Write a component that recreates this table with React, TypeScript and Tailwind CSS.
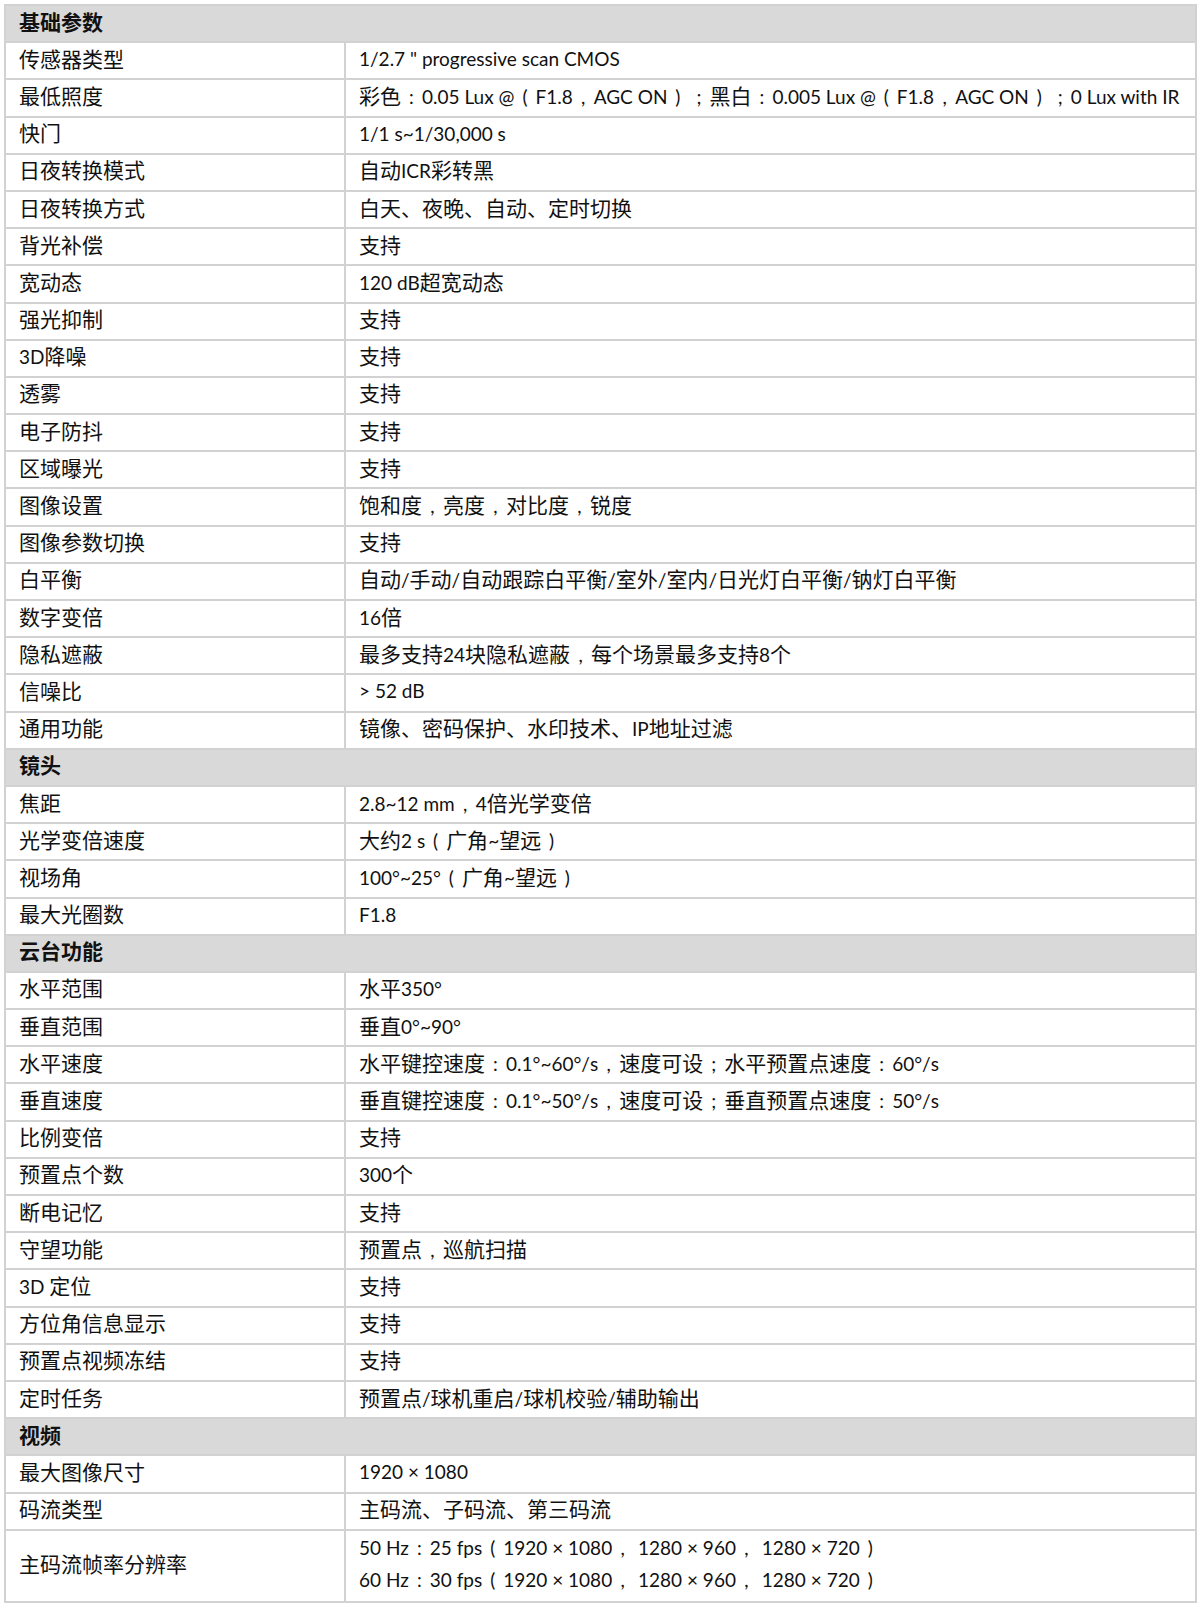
import React from "react";

type Row = [string, string | string[]];
type Section = { title: string; rows: Row[] };

const sections: Section[] = [
  {
    title: "基础参数",
    rows: [
      ["传感器类型", "1/2.7 \" progressive scan CMOS"],
      ["最低照度", "彩色：0.05 Lux @（F1.8，AGC ON）；黑白：0.005 Lux @（F1.8，AGC ON）；0 Lux with IR"],
      ["快门", "1/1 s~1/30,000 s"],
      ["日夜转换模式", "自动ICR彩转黑"],
      ["日夜转换方式", "白天、夜晚、自动、定时切换"],
      ["背光补偿", "支持"],
      ["宽动态", "120 dB超宽动态"],
      ["强光抑制", "支持"],
      ["3D降噪", "支持"],
      ["透雾", "支持"],
      ["电子防抖", "支持"],
      ["区域曝光", "支持"],
      ["图像设置", "饱和度，亮度，对比度，锐度"],
      ["图像参数切换", "支持"],
      ["白平衡", "自动/手动/自动跟踪白平衡/室外/室内/日光灯白平衡/钠灯白平衡"],
      ["数字变倍", "16倍"],
      ["隐私遮蔽", "最多支持24块隐私遮蔽，每个场景最多支持8个"],
      ["信噪比", "> 52 dB"],
      ["通用功能", "镜像、密码保护、水印技术、IP地址过滤"],
    ],
  },
  {
    title: "镜头",
    rows: [
      ["焦距", "2.8~12 mm，4倍光学变倍"],
      ["光学变倍速度", "大约2 s（广角~望远）"],
      ["视场角", "100°~25°（广角~望远）"],
      ["最大光圈数", "F1.8"],
    ],
  },
  {
    title: "云台功能",
    rows: [
      ["水平范围", "水平350°"],
      ["垂直范围", "垂直0°~90°"],
      ["水平速度", "水平键控速度：0.1°~60°/s，速度可设；水平预置点速度：60°/s"],
      ["垂直速度", "垂直键控速度：0.1°~50°/s，速度可设；垂直预置点速度：50°/s"],
      ["比例变倍", "支持"],
      ["预置点个数", "300个"],
      ["断电记忆", "支持"],
      ["守望功能", "预置点，巡航扫描"],
      ["3D 定位", "支持"],
      ["方位角信息显示", "支持"],
      ["预置点视频冻结", "支持"],
      ["定时任务", "预置点/球机重启/球机校验/辅助输出"],
    ],
  },
  {
    title: "视频",
    rows: [
      ["最大图像尺寸", "1920 × 1080"],
      ["码流类型", "主码流、子码流、第三码流"],
      [
        "主码流帧率分辨率",
        [
          "50 Hz：25 fps（1920 × 1080， 1280 × 960， 1280 × 720）",
          "60 Hz：30 fps（1920 × 1080， 1280 × 960， 1280 × 720）",
        ],
      ],
    ],
  },
];

const PUNCT: Record<string, string> = {
  "：": ":",
  "，": ",",
  "；": ";",
  "（": "(",
  "）": ")",
};

function Rich({ text }: { text: string }) {
  const parts: { t: string; k: "cjk" | "p" | "lat" }[] = [];
  for (const ch of text) {
    if (PUNCT[ch]) {
      parts.push({ t: PUNCT[ch], k: "p" });
      continue;
    }
    const k: "cjk" | "lat" = /[\u3000-\u303f\u4e00-\u9fff\uff00-\uffef]/.test(ch)
      ? "cjk"
      : "lat";
    const last = parts[parts.length - 1];
    if (last && last.k === k) last.t += ch;
    else parts.push({ t: ch, k });
  }
  return (
    <>
      {parts.map((p, i) =>
        p.k === "lat" ? (
          <span key={i} className="text-[19px]">
            {p.t}
          </span>
        ) : p.k === "p" ? (
          <span key={i} className="inline-block w-[21px] text-center text-[19px]">
            {p.t}
          </span>
        ) : (
          <span key={i} className="text-[21px]">
            {p.t}
          </span>
        )
      )}
    </>
  );
}

const cell =
  "border-2 border-[#d2d2d2] px-[13px] pb-[5px] align-middle leading-none whitespace-nowrap overflow-hidden";

export default function App() {
  return (
    <div
      className="bg-white pl-[4px] pt-[4px] text-[20px] text-[#111]"
      style={{ fontFamily: 'Lato, "Noto Sans CJK SC", sans-serif' }}
    >
      <table className="w-[1193px] table-fixed border-collapse border-2 border-[#d2d2d2]">
        <colgroup>
          <col className="w-[340px]" />
          <col />
        </colgroup>
        <tbody>
          {sections.map((s) => (
            <React.Fragment key={s.title}>
              <tr className="h-[37.2px] bg-[#d9d9d9]">
                <td colSpan={2} className={`${cell} font-bold`}>
                  <Rich text={s.title} />
                </td>
              </tr>
              {s.rows.map(([label, value]) =>
                Array.isArray(value) ? (
                  <tr key={label} className="h-[72px]">
                    <td className={cell}>
                      <Rich text={label} />
                    </td>
                    <td className={cell}>
                      <div className="flex flex-col gap-[12px]">
                        {value.map((v) => (
                          <div key={v}>
                            <Rich text={v} />
                          </div>
                        ))}
                      </div>
                    </td>
                  </tr>
                ) : (
                  <tr key={label} className="h-[37.2px]">
                    <td className={cell}>
                      <Rich text={label} />
                    </td>
                    <td className={cell}>
                      <Rich text={value} />
                    </td>
                  </tr>
                )
              )}
            </React.Fragment>
          ))}
        </tbody>
      </table>
    </div>
  );
}
